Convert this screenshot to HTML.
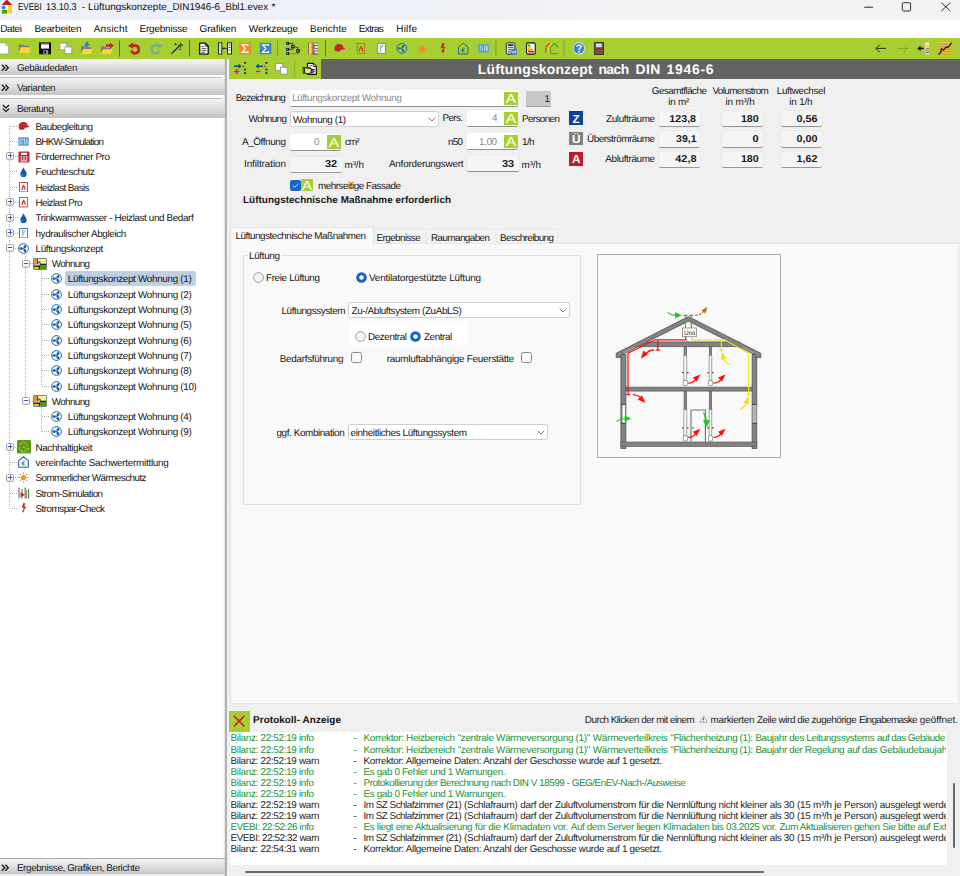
<!DOCTYPE html>
<html><head><meta charset="utf-8"><title>EVEBI</title><style>
html,body{margin:0;padding:0;}
body{width:960px;height:876px;position:relative;overflow:hidden;background:#f0f0f0;font-family:"Liberation Sans",sans-serif;text-rendering:geometricPrecision;}
div,svg,span{position:absolute;box-sizing:border-box;}
.t{white-space:pre;line-height:12px;height:12px;}
</style></head><body>
<div style="left:0px;top:0px;width:960px;height:19.6px;background:linear-gradient(90deg,#eef1fa 0%,#eff1f8 45%,#f2f2f1 75%,#f3f3f2 100%);"></div>
<div style="left:0px;top:19.6px;width:960px;height:0.8px;background:#f8f9fc;"></div>
<svg style="left:0;top:0" width="14" height="15" viewBox="0 0 14 15"><rect x="1.7" y="4.6" width="10.4" height="9.2" fill="#fff"/><path d="M6.9 -0.4L12.3 4.9H1.5Z" fill="#c4161c"/><circle cx="3.6" cy="7.4" r="1.85" fill="#2f7fc4"/><rect x="1.9" y="9.8" width="5.4" height="3.8" fill="#4e9a0a"/><rect x="7.9" y="5.7" width="4.1" height="7.9" fill="#fdd321"/></svg>
<svg style="left:860px;top:0" width="100" height="20" viewBox="0 0 100 20"><g stroke="#1b1b1b" stroke-width="0.9" fill="none"><path d="M4.2 7.2H13"/><rect x="42.3" y="2.7" width="8.3" height="8.3" rx="1.2"/><path d="M81.3 2.6L90.3 11M90.3 2.6L81.3 11"/></g></svg>
<div style="left:0px;top:20px;width:960px;height:18px;background:#fff;"></div>
<div style="left:0px;top:38px;width:960px;height:21px;background:#a8cf32;"></div>
<svg style="left:0;top:38px" width="960" height="21" viewBox="0 38 960 21"><path d="M-1 42.9H5.6L8.4 45.7V53.9H-1Z" fill="#fff" stroke="#9a9a9a" stroke-width="0.7"/><path d="M5.6 42.9V45.7H8.4" fill="#e8e8e8" stroke="#9a9a9a" stroke-width="0.7"/><path d="M18.8 52.5V44.6H23.0L24.0 45.7H29.0V52.5Z" fill="#7d7d7d"/><path d="M18.900000000000002 53L20.7 47.3H30.6L28.900000000000002 53Z" fill="#fdd633"/><rect x="39" y="42.4" width="12" height="11.9" fill="#0c0c0c"/><rect x="41" y="43" width="8" height="5.6" fill="#fff"/><rect x="41" y="43" width="8" height="1.5" fill="#d8262c"/><rect x="43.2" y="50.2" width="5" height="4.1" fill="#9a9a9a"/><rect x="44.3" y="51" width="1.8" height="2.6" fill="#0c0c0c"/><rect x="59.9" y="43.1" width="6.9" height="6.8" fill="#fff" stroke="#8d8d8d" stroke-width="0.8"/><rect x="64.9" y="46.9" width="6.9" height="6.8" fill="#fff" stroke="#8d8d8d" stroke-width="0.8"/><path d="M81 53.6V46.2H85.2L86.2 47.300000000000004H91.2V53.6Z" fill="#7d7d7d"/><path d="M81.1 54.1L82.9 48.9H92.8L91.1 54.1Z" fill="#fdd633"/><path d="M85.6 41.8H88.2V44.3H90.2L86.9 47.5L83.6 44.3H85.6Z" fill="#2f7fc4"/><path d="M101 53.6V46.6H105.2L106.2 47.7H111.0V53.6Z" fill="#7d7d7d"/><path d="M101.1 54.1L102.9 49.3H112.6L110.89999999999999 54.1Z" fill="#fdd633"/><path d="M106 44.3H110V42.6L113.9 45.5L110 48.4V46.7H106Z" fill="#c8232b"/><path d="M132.4 45.7H135.2A3.8 3.8 0 1 1 131.4 50.6" fill="none" stroke="#c9202a" stroke-width="2.7"/><path d="M133.2 42.4V49L128 45.7Z" fill="#c9202a"/><path d="M158 45.7H155.2A3.8 3.8 0 1 0 159 50.6" fill="none" stroke="#78b286" stroke-width="2.7"/><path d="M157.2 42.4V49L162.4 45.7Z" fill="#78b286"/><path d="M171.3 53.8L179.3 46" stroke="#111" stroke-width="1.1"/><path d="M180.7 42.8V47.6M178.3 45.2H183.2M175.6 43.2V45.2M174.6 44.2H176.6M180.2 48.6V50M179.5 49.3H180.9" stroke="#111" stroke-width="0.8"/><path d="M199.7 43.2H205.4L208.2 46V54.1H199.7Z" fill="#fff" stroke="#111" stroke-width="1.3" stroke-linejoin="round"/><path d="M205.2 43.4V46.2H208" fill="none" stroke="#111" stroke-width="0.8"/><path d="M201.5 46.4H203.9M201.5 48.6H206.4M201.5 50.6H206.4M201.5 52.4H205" stroke="#333" stroke-width="0.8"/><rect x="218.4" y="42.8" width="3.4" height="11.2" fill="#fff" stroke="#111" stroke-width="0.9"/><rect x="227.5" y="42.8" width="4" height="11.2" fill="#fff" stroke="#111" stroke-width="0.9"/><path d="M219.4 45H220.8M219.4 47H220.8M219.4 49H220.8M219.4 51H220.8" stroke="#5a9a28" stroke-width="0.9"/><path d="M228.6 45H230.6M228.6 47.5H230.6M228.6 50H230.6" stroke="#c8232b" stroke-width="1"/><path d="M222.4 48.4H227" stroke="#111" stroke-width="0.8"/><path d="M224.2 47L222.6 48.4L224.2 49.8Z" fill="#111"/><rect x="239.3" y="42.8" width="11.5" height="11.5" fill="#ee8b2f"/><path d="M247.9 46.0V44.8H242.10000000000002L245.3 48.55L242.10000000000002 52.3H247.9V51.099999999999994" fill="none" stroke="#fff" stroke-width="1.25" stroke-linejoin="miter"/><rect x="259.8" y="42.8" width="11.5" height="11.5" fill="#3a87c4"/><path d="M268.40000000000003 46.0V44.8H262.6L265.8 48.55L262.6 52.3H268.40000000000003V51.099999999999994" fill="none" stroke="#fff" stroke-width="1.25" stroke-linejoin="miter"/><path d="M289 43.4H292.8V45.2M289 49.4H292.8V48" fill="none" stroke="#1560b8" stroke-width="1.1"/><path d="M294.4 47.3H297.8V49.4M297.8 52.4V53.8" fill="none" stroke="#d02028" stroke-width="1.1"/><path d="M289 53.6H297.8" fill="none" stroke="#c87a28" stroke-width="1.3"/><g fill="#0c0c0c"><rect x="286.2" y="41.9" width="2.9" height="2.9"/><rect x="286.2" y="47.9" width="2.9" height="2.9"/><rect x="286.2" y="52.2" width="2.9" height="2.8"/><rect x="291.2" y="45" width="3.4" height="3.2"/><rect x="296.3" y="49.2" width="3.5" height="3.4"/></g><g fill="#e8e8e8"><rect x="287.2" y="42.8" width="0.9" height="1"/><rect x="287.2" y="48.8" width="0.9" height="1"/><rect x="287.2" y="53.1" width="0.9" height="1"/><rect x="292.3" y="46" width="1.2" height="1.2"/><rect x="297.4" y="50.3" width="1.2" height="1.2"/></g><rect x="308.2" y="42.7" width="9.8" height="11.9" fill="#5e5e66"/><rect x="309" y="42.7" width="2.7" height="11.9" fill="#fdd835"/><rect x="311.7" y="42.7" width="1.4" height="11.9" fill="#e0703a"/><g fill="#f4f4f4"><rect x="313.6" y="43.5" width="4.2" height="1.5"/><rect x="314.6" y="46" width="3.2" height="1.9"/><rect x="313.6" y="48.9" width="4.2" height="1.5"/><rect x="314.6" y="51.4" width="3.2" height="1.9"/></g><g fill="#d8404a"><rect x="313.2" y="43.5" width="0.9" height="1.5"/><rect x="313.2" y="48.9" width="0.9" height="1.5"/></g><g fill="#fff3b0"><rect x="309" y="45.4" width="2.7" height="0.6"/><rect x="309" y="48.2" width="2.7" height="0.6"/><rect x="309" y="51" width="2.7" height="0.6"/></g><path d="M334.5 48.6C334.3 45.8 336.6 44 339.2 44.1C341.6 44.2 343 45.8 343.3 47.4L345.2 48.5C345.3 49 343 49.4 341 49.8L339.8 51.2C338.2 51.7 335.6 51.5 334.9 50.6Z" fill="#c8232b"/><rect x="357.3" y="43.4" width="7.4" height="9.9" fill="none" stroke="#d8612b" stroke-width="0.9"/><path d="M358.9 51.6C358.5 48.8 360.3 47.8 360.9 45.2C362 47.4 363.6 48.8 363.3 51.6H362.1C362.4 50.2 361.7 49.4 360.9 48.6C360.3 49.4 359.7 50.2 360 51.6Z" fill="#d6342b"/><rect x="377.7" y="43.4" width="7.8" height="9.9" fill="#fff" stroke="#4a8fc9" stroke-width="0.9"/><path d="M380.6 44.8V52M380.6 48.4C380.6 47 382.8 47.2 382.8 45M382 45.2H383.4" stroke="#4a8fc9" stroke-width="0.8" fill="none"/><circle cx="401.8" cy="48.3" r="4.9" fill="none" stroke="#1c64b0" stroke-width="1"/><g fill="#1c64b0"><ellipse cx="399.5" cy="48.4" rx="1.6" ry="1.15"/><ellipse cx="403.2" cy="46.4" rx="1.6" ry="1.15" transform="rotate(-55 403.2 46.4)"/><ellipse cx="403.1" cy="50.3" rx="1.6" ry="1.15" transform="rotate(55 403.1 50.3)"/><circle cx="401.7" cy="48.4" r="0.55"/></g><circle cx="422.1" cy="48.9" r="2.6" fill="#f08a24"/><g stroke="#ee9438" stroke-width="1.15"><path d="M422.1 43.7V45.5M422.1 52.3V54.1M416.9 48.9H418.7M425.5 48.9H427.3M418.5 45.3L419.7 46.5M424.5 51.3L425.7 52.5M425.7 45.3L424.5 46.5M419.7 51.3L418.5 52.5"/></g><path d="M442 43.3L444.6 43.3L443.3 46.6L445.2 46.6L443.6 50.4L444.9 50.4L442.9 53.3L441 50.4L442.2 50.4L443 48L440.9 48Z" fill="#d02028"/><path d="M458.5 54V47L463.2 43L467.9 47V54Z" fill="none" stroke="#1f6cae" stroke-width="1" stroke-linejoin="round"/><path d="M465 48.3C464 47.7 462.3 48 462.2 50.1C462.3 52.2 464 52.5 465 51.9M461.3 49.6H464.1M461.3 50.7H464.1" stroke="#1f6cae" stroke-width="0.8" fill="none"/><rect x="478.4" y="44.3" width="10.4" height="8.1" fill="#4a98d4"/><path d="M480.2 45.5V51.2M482 45.5C481.2 47 483 48 482 51.2M484.6 45.5V51.2M486.2 45.5V51.2M487.6 45.5V51.2" stroke="#dff0fb" stroke-width="0.7" fill="none"/><rect x="506.3" y="42.8" width="8.6" height="11.4" rx="0.9" fill="#efefef" stroke="#2a2a2a" stroke-width="1"/><path d="M508 45.1H513.4" stroke="#0c0c0c" stroke-width="1.5"/><path d="M508 47.4H513.4M508 49.4H510.6M508 51.4H510M508 53H509.6" stroke="#333" stroke-width="0.8"/><rect x="510.4" y="48.8" width="6.6" height="5.8" fill="#3e7fc8"/><path d="M511.5 50.3L512.6 53.2L513.8 51L515 53.2L516.1 50.3" stroke="#e2ecf8" stroke-width="0.75" fill="none"/><rect x="526.6" y="42.9" width="8.6" height="11.2" rx="1.2" fill="#fff" stroke="#111" stroke-width="1.1"/><rect x="528" y="44.4" width="2" height="1.5" fill="#3a9a35"/><rect x="528" y="46" width="3" height="1.5" fill="#9fc92e"/><rect x="528" y="47.6" width="4" height="1.5" fill="#f5d928"/><rect x="528" y="49.2" width="5" height="1.5" fill="#ef8a2a"/><rect x="528" y="50.8" width="6" height="1.7" fill="#d8262c"/><path d="M549.6 43.4L546 47V52.2" fill="none" stroke="#c8232b" stroke-width="1.2" stroke-dasharray="2.2 0.7"/><path d="M551.8 43.6L548.2 47.2V53.4H549.4" fill="none" stroke="#f6cf2e" stroke-width="1.2" stroke-dasharray="2.2 0.7"/><path d="M558.2 47.6L554.4 43.3L550.4 47.6V53.8H558" fill="none" stroke="#4c9a1e" stroke-width="1.1"/><circle cx="578.9" cy="48.3" r="5.7" fill="#3d85c8" stroke="#e6eef7" stroke-width="0.9"/><path d="M576.9 46.7C576.9 44.6 581 44.6 581 46.8C581 48.2 579 48 579 49.8" stroke="#fff" stroke-width="1.4" fill="none"/><rect x="578.2" y="50.8" width="1.6" height="1.5" fill="#fff"/><rect x="594.4" y="42.3" width="9" height="12.3" fill="#7b4b3c" stroke="#3a2520" stroke-width="0.8"/><rect x="596" y="43.6" width="5.8" height="3.6" fill="#bfe0f7"/><rect x="594.8" y="48.4" width="8.2" height="0.6" fill="#63392d"/><rect x="119.0" y="40.3" width="1" height="16.2" fill="#4f6a17"/><rect x="189.0" y="40.3" width="1" height="16.2" fill="#4f6a17"/><rect x="277.1" y="40.3" width="1" height="16.2" fill="#7f9f2a"/><rect x="325.0" y="40.3" width="1" height="16.2" fill="#5a771b"/><rect x="495.4" y="40.3" width="1" height="16.2" fill="#7f9f2a"/><rect x="563.5" y="40.3" width="1" height="16.2" fill="#7f9f2a"/><path d="M886 48.4H876.2M879.8 44.6L876 48.4L879.8 52.2" fill="none" stroke="#1a1a1a" stroke-width="0.9"/><path d="M897.4 48.4H907.4M903.8 44.6L907.6 48.4L903.8 52.2" fill="none" stroke="#7d9d2d" stroke-width="0.9"/><rect x="924.8" y="42.2" width="4.8" height="12.6" fill="#f4f4f4" stroke="#a8a8a8" stroke-width="0.7"/><rect x="925.4" y="44.4" width="3.6" height="3.2" fill="#f8d62e"/><rect x="925.4" y="48.2" width="3.6" height="1.2" fill="#d95c3a"/><rect x="925.4" y="49.8" width="3.6" height="1.6" fill="#7fb43a"/><rect x="925.4" y="52" width="3.6" height="0.8" fill="#333"/><path d="M923.6 48.4H919.4" stroke="#111" stroke-width="1.6"/><path d="M920.6 45.8L917.2 48.4L920.6 51Z" fill="#111"/><rect x="938" y="42" width="14.2" height="13.2" fill="#f2c22e"/><g fill="#a89a55"><rect x="938" y="43.8" width="14.2" height="1"/><rect x="938" y="46.2" width="14.2" height="1"/><rect x="938" y="48.6" width="14.2" height="1"/><rect x="938" y="51" width="14.2" height="1"/><rect x="938" y="53.4" width="14.2" height="1"/></g><path d="M938.6 54.6L940.6 52.4L941.6 48.8L943.4 50.2L946 47.2L947.6 47.6L951.8 42.6" fill="none" stroke="#151515" stroke-width="1.2"/></svg>
<div style="left:0px;top:59px;width:225.2px;height:817px;background:#fff;"></div>
<div style="left:0px;top:59.6px;width:225.2px;height:15.1px;background:linear-gradient(#f2f2f2 0%,#e8e8e8 30%,#d0d0d0 80%,#c4c4c4 100%);"></div>
<svg style="left:1.4px;top:63.800000000000004px" width="8.2" height="7.6" viewBox="0 0 8.2 7.6"><path d="M0.9 0.8L3.8 3.8L0.9 6.8M4.4 0.8L7.3 3.8L4.4 6.8" stroke="#111" stroke-width="1.25" fill="none"/></svg>
<div style="left:0px;top:77.2px;width:221.5px;height:0.8px;background:#bdbdbd;"></div>
<div style="left:0px;top:77.9px;width:225.2px;height:17.1px;background:linear-gradient(#f2f2f2 0%,#e8e8e8 30%,#d0d0d0 80%,#c4c4c4 100%);"></div>
<svg style="left:1.4px;top:83.9px" width="8.2" height="7.6" viewBox="0 0 8.2 7.6"><path d="M0.9 0.8L3.8 3.8L0.9 6.8M4.4 0.8L7.3 3.8L4.4 6.8" stroke="#111" stroke-width="1.25" fill="none"/></svg>
<div style="left:0px;top:98.1px;width:221.5px;height:0.8px;background:#bdbdbd;"></div>
<div style="left:0px;top:98.8px;width:225.2px;height:17.8px;background:linear-gradient(#f2f2f2 0%,#e8e8e8 30%,#d0d0d0 80%,#c4c4c4 100%);"></div>
<svg style="left:1.5px;top:104.2px" width="8" height="8.4" viewBox="0 0 8 8.4"><path d="M0.9 1L4 3.9L7.1 1M0.9 4.6L4 7.5L7.1 4.6" stroke="#111" stroke-width="1.25" fill="none"/></svg>
<div style="left:0px;top:116.6px;width:225.2px;height:0.7px;background:#c4c4c4;"></div>
<div style="left:0px;top:857.8px;width:225.2px;height:0.9px;background:#aaaaaa;"></div>
<div style="left:0px;top:858.6px;width:225.2px;height:15.7px;background:linear-gradient(#f2f2f2 0%,#e8e8e8 30%,#d0d0d0 80%,#c4c4c4 100%);"></div>
<svg style="left:1.4px;top:863.6px" width="8.2" height="7.6" viewBox="0 0 8.2 7.6"><path d="M0.9 0.8L3.8 3.8L0.9 6.8M4.4 0.8L7.3 3.8L4.4 6.8" stroke="#111" stroke-width="1.25" fill="none"/></svg>
<div style="left:0px;top:874.3px;width:225.2px;height:1.7px;background:#ebebeb;"></div>
<div style="left:222.6px;top:59px;width:2.6px;height:817px;background:linear-gradient(90deg,rgba(200,200,200,0),rgba(200,200,200,0.55));"></div>
<div style="left:225.1px;top:59px;width:1.9px;height:817px;background:linear-gradient(90deg,#b4b4b4,#a9a9a9 60%,#c4c4c4);"></div>
<div style="left:227px;top:59px;width:1.9px;height:19.9px;background:#f6f6fa;"></div>
<div style="left:64.7px;top:271.3px;width:131.2px;height:15.1px;background:#c1cfe2;border-radius:2.5px;"></div>
<div style="left:8.7px;top:126.0px;width:1px;height:382.375px;background:repeating-linear-gradient(180deg,#b2b2b2 0 1px,transparent 1px 2px);"></div>
<div style="left:25.1px;top:254.36px;width:1px;height:142.95px;background:repeating-linear-gradient(180deg,#b2b2b2 0 1px,transparent 1px 2px);"></div>
<div style="left:41.0px;top:269.655px;width:1px;height:116.36000000000001px;background:repeating-linear-gradient(180deg,#b2b2b2 0 1px,transparent 1px 2px);"></div>
<div style="left:41.0px;top:407.31px;width:1px;height:24.589999999999975px;background:repeating-linear-gradient(180deg,#b2b2b2 0 1px,transparent 1px 2px);"></div>
<div style="left:9.5px;top:125.5px;width:8.5px;height:1px;background:repeating-linear-gradient(90deg,#b2b2b2 0 1px,transparent 1px 2px);"></div>
<svg style="left:17.90px;top:121.50px" width="12" height="9" viewBox="0 0 12 9"><path transform="translate(0,-0.7)" d="M0.6 5.2C0.6 2.4 2.8 0.6 5.4 0.6C8 0.6 9.6 2.3 9.8 4.2L11.6 5.2C11.8 5.9 9 6.3 7 6.6L6 8.2C4 8.6 1.5 8.2 0.9 7.4Z" fill="#c1272d"/></svg>
<div style="left:9.5px;top:140.795px;width:8.5px;height:1px;background:repeating-linear-gradient(90deg,#b2b2b2 0 1px,transparent 1px 2px);"></div>
<svg style="left:18.40px;top:136.79px" width="11" height="9" viewBox="0 0 11 9"><rect x="0.3" y="0.3" width="10.4" height="8.4" fill="#4f9bd0"/><path d="M2 1.5V7.5M4 1.5V4M4 5V7.5M6.5 1.5C5.5 3 7.5 4.5 6.5 7.5M8.7 1.5C7.7 3 9.7 4.5 8.7 7.5" stroke="#e8f3fb" stroke-width="0.8" fill="none"/></svg>
<div style="left:13px;top:156.09px;width:5px;height:1px;background:repeating-linear-gradient(90deg,#b2b2b2 0 1px,transparent 1px 2px);"></div>
<svg style="left:6px;top:152px" width="8" height="8" viewBox="0 0 8 8"><defs><linearGradient id="eg2" x1="0" y1="0" x2="0" y2="1"><stop offset="0.4" stop-color="#fff"/><stop offset="1" stop-color="#ececec"/></linearGradient></defs><rect x="0.5" y="0.5" width="7" height="6.8" rx="1" fill="url(#eg2)" stroke="#989898" stroke-width="0.9"/><path d="M1.8 3.5H6.2M4.5 1.4V5.7" stroke="#3b5cc0" stroke-width="1"/></svg>
<svg style="left:17.90px;top:150.59px" width="12" height="12" viewBox="0 0 12 12"><rect x="0.5" y="0.5" width="11" height="11" rx="1" fill="#c1272d"/><rect x="3" y="1.8" width="6" height="2.2" fill="#fff"/><g fill="#fff"><rect x="2.6" y="5.3" width="1.6" height="1.3"/><rect x="5.2" y="5.3" width="1.6" height="1.3"/><rect x="7.8" y="5.3" width="1.6" height="1.3"/><rect x="2.6" y="7.4" width="1.6" height="1.3"/><rect x="5.2" y="7.4" width="1.6" height="1.3"/><rect x="7.8" y="7.4" width="1.6" height="1.3"/><rect x="2.6" y="9.4" width="6.8" height="1.1"/></g></svg>
<div style="left:9.5px;top:171.385px;width:8.5px;height:1px;background:repeating-linear-gradient(90deg,#b2b2b2 0 1px,transparent 1px 2px);"></div>
<svg style="left:20.40px;top:166.69px" width="7" height="10.4" viewBox="0 0 7 10.4"><path d="M3.5 0.2C4.3 2.9 6.7 4.6 6.7 7A3.2 3.2 0 0 1 0.3 7C0.3 4.6 2.7 2.9 3.5 0.2Z" fill="#1659a5"/><circle cx="2.1" cy="7.9" r="0.55" fill="#cfe0f3"/></svg>
<div style="left:9.5px;top:186.68px;width:8.5px;height:1px;background:repeating-linear-gradient(90deg,#b2b2b2 0 1px,transparent 1px 2px);"></div>
<svg style="left:19.40px;top:181.98px" width="9" height="10.4" viewBox="0 0 9 10.4"><rect x="0.45" y="0.45" width="8.1" height="9.5" fill="#fff" stroke="#cb3b40" stroke-width="0.9"/><path d="M2.6 7.9C2 5.6 3.9 4.6 4.4 2.4C5.6 3.9 7 5.2 6.6 7.9H5.5C5.9 6.6 5.3 5.9 4.6 5.2C4.2 6 3.6 6.6 3.9 7.9Z" fill="#cf2b30"/></svg>
<div style="left:13px;top:201.975px;width:5px;height:1px;background:repeating-linear-gradient(90deg,#b2b2b2 0 1px,transparent 1px 2px);"></div>
<svg style="left:6px;top:198px" width="8" height="8" viewBox="0 0 8 8"><defs><linearGradient id="eg5" x1="0" y1="0" x2="0" y2="1"><stop offset="0.4" stop-color="#fff"/><stop offset="1" stop-color="#ececec"/></linearGradient></defs><rect x="0.5" y="0.5" width="7" height="6.8" rx="1" fill="url(#eg5)" stroke="#989898" stroke-width="0.9"/><path d="M1.8 3.5H6.2M4.5 1.4V5.7" stroke="#3b5cc0" stroke-width="1"/></svg>
<svg style="left:19.40px;top:197.28px" width="9" height="10.4" viewBox="0 0 9 10.4"><rect x="0.45" y="0.45" width="8.1" height="9.5" fill="#fff" stroke="#cb3b40" stroke-width="0.9"/><path d="M2.6 7.9C2 5.6 3.9 4.6 4.4 2.4C5.6 3.9 7 5.2 6.6 7.9H5.5C5.9 6.6 5.3 5.9 4.6 5.2C4.2 6 3.6 6.6 3.9 7.9Z" fill="#cf2b30"/></svg>
<div style="left:13px;top:217.26999999999998px;width:5px;height:1px;background:repeating-linear-gradient(90deg,#b2b2b2 0 1px,transparent 1px 2px);"></div>
<svg style="left:6px;top:214px" width="8" height="8" viewBox="0 0 8 8"><defs><linearGradient id="eg6" x1="0" y1="0" x2="0" y2="1"><stop offset="0.4" stop-color="#fff"/><stop offset="1" stop-color="#ececec"/></linearGradient></defs><rect x="0.5" y="0.5" width="7" height="6.8" rx="1" fill="url(#eg6)" stroke="#989898" stroke-width="0.9"/><path d="M1.8 3.5H6.2M4.5 1.4V5.7" stroke="#3b5cc0" stroke-width="1"/></svg>
<svg style="left:20.40px;top:212.57px" width="7" height="10.4" viewBox="0 0 7 10.4"><path d="M3.5 0.2C4.3 2.9 6.7 4.6 6.7 7A3.2 3.2 0 0 1 0.3 7C0.3 4.6 2.7 2.9 3.5 0.2Z" fill="#1659a5"/><circle cx="2.1" cy="7.9" r="0.55" fill="#cfe0f3"/></svg>
<div style="left:13px;top:232.565px;width:5px;height:1px;background:repeating-linear-gradient(90deg,#b2b2b2 0 1px,transparent 1px 2px);"></div>
<svg style="left:6px;top:229px" width="8" height="8" viewBox="0 0 8 8"><defs><linearGradient id="eg7" x1="0" y1="0" x2="0" y2="1"><stop offset="0.4" stop-color="#fff"/><stop offset="1" stop-color="#ececec"/></linearGradient></defs><rect x="0.5" y="0.5" width="7" height="6.8" rx="1" fill="url(#eg7)" stroke="#989898" stroke-width="0.9"/><path d="M1.8 3.5H6.2M4.5 1.4V5.7" stroke="#3b5cc0" stroke-width="1"/></svg>
<svg style="left:19.40px;top:227.87px" width="9" height="10.4" viewBox="0 0 9 10.4"><rect x="0.5" y="0.5" width="8" height="9.4" fill="#fff" stroke="#3a80c0" stroke-width="1"/><path d="M3.8 2.1V8.6M3.8 5.6L6.2 3.4V2.4M3 2.3H4.6" stroke="#4a8fc9" stroke-width="0.8" fill="none"/></svg>
<div style="left:13px;top:247.86px;width:5px;height:1px;background:repeating-linear-gradient(90deg,#b2b2b2 0 1px,transparent 1px 2px);"></div>
<svg style="left:6px;top:244px" width="8" height="8" viewBox="0 0 8 8"><defs><linearGradient id="eg8" x1="0" y1="0" x2="0" y2="1"><stop offset="0.4" stop-color="#fff"/><stop offset="1" stop-color="#ececec"/></linearGradient></defs><rect x="0.5" y="0.5" width="7" height="6.8" rx="1" fill="url(#eg8)" stroke="#989898" stroke-width="0.9"/><path d="M1.8 3.5H6.2" stroke="#3b5cc0" stroke-width="1"/></svg>
<svg style="left:18.40px;top:242.86px" width="11" height="11" viewBox="0 0 11 11"><circle cx="5.5" cy="5.5" r="4.85" fill="#fff" stroke="#1760a8" stroke-width="1"/><ellipse cx="3.25" cy="5.6" rx="1.7" ry="1.3" fill="#1760a8"/><ellipse cx="6.9" cy="3.7" rx="1.75" ry="1.3" transform="rotate(-55 6.9 3.7)" fill="#1760a8"/><ellipse cx="6.8" cy="7.5" rx="1.75" ry="1.3" transform="rotate(55 6.8 7.5)" fill="#1760a8"/><circle cx="5.4" cy="5.6" r="0.55" fill="#1760a8"/></svg>
<div style="left:29.5px;top:263.155px;width:3.5px;height:1px;background:repeating-linear-gradient(90deg,#b2b2b2 0 1px,transparent 1px 2px);"></div>
<svg style="left:22px;top:260px" width="8" height="8" viewBox="0 0 8 8"><defs><linearGradient id="eg9" x1="0" y1="0" x2="0" y2="1"><stop offset="0.4" stop-color="#fff"/><stop offset="1" stop-color="#ececec"/></linearGradient></defs><rect x="0.5" y="0.5" width="7" height="6.8" rx="1" fill="url(#eg9)" stroke="#989898" stroke-width="0.9"/><path d="M1.8 3.5H6.2" stroke="#3b5cc0" stroke-width="1"/></svg>
<svg style="left:33.00px;top:257.65px" width="14" height="12" viewBox="0 0 14 12"><rect x="0.45" y="0.45" width="13.1" height="11.1" fill="#1a1a1a"/><rect x="0.9" y="1" width="3.4" height="5" fill="#f0922a"/><rect x="5" y="1" width="8.1" height="4.7" fill="#f7f0a0"/><path d="M4.3 3.4H7.4V8.2H0.9V6.2H5.4V3.4Z" fill="#1a1a1a"/><path d="M1 6.9H6.1V4.4" fill="none" stroke="#f1f1f1" stroke-width="1.2"/><rect x="1.1" y="8.9" width="4.7" height="2" fill="#f8d21c"/><rect x="7" y="6.9" width="6.1" height="4.1" fill="#4f9a06"/></svg>
<div style="left:41.5px;top:278.45px;width:8.5px;height:1px;background:repeating-linear-gradient(90deg,#b2b2b2 0 1px,transparent 1px 2px);"></div>
<svg style="left:50.65px;top:273.45px" width="11" height="11" viewBox="0 0 11 11"><circle cx="5.5" cy="5.5" r="4.85" fill="#fff" stroke="#1760a8" stroke-width="1"/><ellipse cx="3.25" cy="5.6" rx="1.7" ry="1.3" fill="#1760a8"/><ellipse cx="6.9" cy="3.7" rx="1.75" ry="1.3" transform="rotate(-55 6.9 3.7)" fill="#1760a8"/><ellipse cx="6.8" cy="7.5" rx="1.75" ry="1.3" transform="rotate(55 6.8 7.5)" fill="#1760a8"/><circle cx="5.4" cy="5.6" r="0.55" fill="#1760a8"/></svg>
<div style="left:41.5px;top:293.745px;width:8.5px;height:1px;background:repeating-linear-gradient(90deg,#b2b2b2 0 1px,transparent 1px 2px);"></div>
<svg style="left:50.65px;top:288.75px" width="11" height="11" viewBox="0 0 11 11"><circle cx="5.5" cy="5.5" r="4.85" fill="#fff" stroke="#1760a8" stroke-width="1"/><ellipse cx="3.25" cy="5.6" rx="1.7" ry="1.3" fill="#1760a8"/><ellipse cx="6.9" cy="3.7" rx="1.75" ry="1.3" transform="rotate(-55 6.9 3.7)" fill="#1760a8"/><ellipse cx="6.8" cy="7.5" rx="1.75" ry="1.3" transform="rotate(55 6.8 7.5)" fill="#1760a8"/><circle cx="5.4" cy="5.6" r="0.55" fill="#1760a8"/></svg>
<div style="left:41.5px;top:309.03999999999996px;width:8.5px;height:1px;background:repeating-linear-gradient(90deg,#b2b2b2 0 1px,transparent 1px 2px);"></div>
<svg style="left:50.65px;top:304.04px" width="11" height="11" viewBox="0 0 11 11"><circle cx="5.5" cy="5.5" r="4.85" fill="#fff" stroke="#1760a8" stroke-width="1"/><ellipse cx="3.25" cy="5.6" rx="1.7" ry="1.3" fill="#1760a8"/><ellipse cx="6.9" cy="3.7" rx="1.75" ry="1.3" transform="rotate(-55 6.9 3.7)" fill="#1760a8"/><ellipse cx="6.8" cy="7.5" rx="1.75" ry="1.3" transform="rotate(55 6.8 7.5)" fill="#1760a8"/><circle cx="5.4" cy="5.6" r="0.55" fill="#1760a8"/></svg>
<div style="left:41.5px;top:324.33500000000004px;width:8.5px;height:1px;background:repeating-linear-gradient(90deg,#b2b2b2 0 1px,transparent 1px 2px);"></div>
<svg style="left:50.65px;top:319.34px" width="11" height="11" viewBox="0 0 11 11"><circle cx="5.5" cy="5.5" r="4.85" fill="#fff" stroke="#1760a8" stroke-width="1"/><ellipse cx="3.25" cy="5.6" rx="1.7" ry="1.3" fill="#1760a8"/><ellipse cx="6.9" cy="3.7" rx="1.75" ry="1.3" transform="rotate(-55 6.9 3.7)" fill="#1760a8"/><ellipse cx="6.8" cy="7.5" rx="1.75" ry="1.3" transform="rotate(55 6.8 7.5)" fill="#1760a8"/><circle cx="5.4" cy="5.6" r="0.55" fill="#1760a8"/></svg>
<div style="left:41.5px;top:339.63px;width:8.5px;height:1px;background:repeating-linear-gradient(90deg,#b2b2b2 0 1px,transparent 1px 2px);"></div>
<svg style="left:50.65px;top:334.63px" width="11" height="11" viewBox="0 0 11 11"><circle cx="5.5" cy="5.5" r="4.85" fill="#fff" stroke="#1760a8" stroke-width="1"/><ellipse cx="3.25" cy="5.6" rx="1.7" ry="1.3" fill="#1760a8"/><ellipse cx="6.9" cy="3.7" rx="1.75" ry="1.3" transform="rotate(-55 6.9 3.7)" fill="#1760a8"/><ellipse cx="6.8" cy="7.5" rx="1.75" ry="1.3" transform="rotate(55 6.8 7.5)" fill="#1760a8"/><circle cx="5.4" cy="5.6" r="0.55" fill="#1760a8"/></svg>
<div style="left:41.5px;top:354.925px;width:8.5px;height:1px;background:repeating-linear-gradient(90deg,#b2b2b2 0 1px,transparent 1px 2px);"></div>
<svg style="left:50.65px;top:349.93px" width="11" height="11" viewBox="0 0 11 11"><circle cx="5.5" cy="5.5" r="4.85" fill="#fff" stroke="#1760a8" stroke-width="1"/><ellipse cx="3.25" cy="5.6" rx="1.7" ry="1.3" fill="#1760a8"/><ellipse cx="6.9" cy="3.7" rx="1.75" ry="1.3" transform="rotate(-55 6.9 3.7)" fill="#1760a8"/><ellipse cx="6.8" cy="7.5" rx="1.75" ry="1.3" transform="rotate(55 6.8 7.5)" fill="#1760a8"/><circle cx="5.4" cy="5.6" r="0.55" fill="#1760a8"/></svg>
<div style="left:41.5px;top:370.22px;width:8.5px;height:1px;background:repeating-linear-gradient(90deg,#b2b2b2 0 1px,transparent 1px 2px);"></div>
<svg style="left:50.65px;top:365.22px" width="11" height="11" viewBox="0 0 11 11"><circle cx="5.5" cy="5.5" r="4.85" fill="#fff" stroke="#1760a8" stroke-width="1"/><ellipse cx="3.25" cy="5.6" rx="1.7" ry="1.3" fill="#1760a8"/><ellipse cx="6.9" cy="3.7" rx="1.75" ry="1.3" transform="rotate(-55 6.9 3.7)" fill="#1760a8"/><ellipse cx="6.8" cy="7.5" rx="1.75" ry="1.3" transform="rotate(55 6.8 7.5)" fill="#1760a8"/><circle cx="5.4" cy="5.6" r="0.55" fill="#1760a8"/></svg>
<div style="left:41.5px;top:385.515px;width:8.5px;height:1px;background:repeating-linear-gradient(90deg,#b2b2b2 0 1px,transparent 1px 2px);"></div>
<svg style="left:50.65px;top:380.51px" width="11" height="11" viewBox="0 0 11 11"><circle cx="5.5" cy="5.5" r="4.85" fill="#fff" stroke="#1760a8" stroke-width="1"/><ellipse cx="3.25" cy="5.6" rx="1.7" ry="1.3" fill="#1760a8"/><ellipse cx="6.9" cy="3.7" rx="1.75" ry="1.3" transform="rotate(-55 6.9 3.7)" fill="#1760a8"/><ellipse cx="6.8" cy="7.5" rx="1.75" ry="1.3" transform="rotate(55 6.8 7.5)" fill="#1760a8"/><circle cx="5.4" cy="5.6" r="0.55" fill="#1760a8"/></svg>
<div style="left:29.5px;top:400.81px;width:3.5px;height:1px;background:repeating-linear-gradient(90deg,#b2b2b2 0 1px,transparent 1px 2px);"></div>
<svg style="left:22px;top:397px" width="8" height="8" viewBox="0 0 8 8"><defs><linearGradient id="eg18" x1="0" y1="0" x2="0" y2="1"><stop offset="0.4" stop-color="#fff"/><stop offset="1" stop-color="#ececec"/></linearGradient></defs><rect x="0.5" y="0.5" width="7" height="6.8" rx="1" fill="url(#eg18)" stroke="#989898" stroke-width="0.9"/><path d="M1.8 3.5H6.2" stroke="#3b5cc0" stroke-width="1"/></svg>
<svg style="left:33.00px;top:395.31px" width="14" height="12" viewBox="0 0 14 12"><rect x="0.45" y="0.45" width="13.1" height="11.1" fill="#1a1a1a"/><rect x="0.9" y="1" width="3.4" height="5" fill="#f0922a"/><rect x="5" y="1" width="8.1" height="4.7" fill="#f7f0a0"/><path d="M4.3 3.4H7.4V8.2H0.9V6.2H5.4V3.4Z" fill="#1a1a1a"/><path d="M1 6.9H6.1V4.4" fill="none" stroke="#f1f1f1" stroke-width="1.2"/><rect x="1.1" y="8.9" width="4.7" height="2" fill="#f8d21c"/><rect x="7" y="6.9" width="6.1" height="4.1" fill="#4f9a06"/></svg>
<div style="left:41.5px;top:416.105px;width:8.5px;height:1px;background:repeating-linear-gradient(90deg,#b2b2b2 0 1px,transparent 1px 2px);"></div>
<svg style="left:50.65px;top:411.11px" width="11" height="11" viewBox="0 0 11 11"><circle cx="5.5" cy="5.5" r="4.85" fill="#fff" stroke="#1760a8" stroke-width="1"/><ellipse cx="3.25" cy="5.6" rx="1.7" ry="1.3" fill="#1760a8"/><ellipse cx="6.9" cy="3.7" rx="1.75" ry="1.3" transform="rotate(-55 6.9 3.7)" fill="#1760a8"/><ellipse cx="6.8" cy="7.5" rx="1.75" ry="1.3" transform="rotate(55 6.8 7.5)" fill="#1760a8"/><circle cx="5.4" cy="5.6" r="0.55" fill="#1760a8"/></svg>
<div style="left:41.5px;top:431.4px;width:8.5px;height:1px;background:repeating-linear-gradient(90deg,#b2b2b2 0 1px,transparent 1px 2px);"></div>
<svg style="left:50.65px;top:426.40px" width="11" height="11" viewBox="0 0 11 11"><circle cx="5.5" cy="5.5" r="4.85" fill="#fff" stroke="#1760a8" stroke-width="1"/><ellipse cx="3.25" cy="5.6" rx="1.7" ry="1.3" fill="#1760a8"/><ellipse cx="6.9" cy="3.7" rx="1.75" ry="1.3" transform="rotate(-55 6.9 3.7)" fill="#1760a8"/><ellipse cx="6.8" cy="7.5" rx="1.75" ry="1.3" transform="rotate(55 6.8 7.5)" fill="#1760a8"/><circle cx="5.4" cy="5.6" r="0.55" fill="#1760a8"/></svg>
<div style="left:13px;top:446.695px;width:5px;height:1px;background:repeating-linear-gradient(90deg,#b2b2b2 0 1px,transparent 1px 2px);"></div>
<svg style="left:6px;top:443px" width="8" height="8" viewBox="0 0 8 8"><defs><linearGradient id="eg21" x1="0" y1="0" x2="0" y2="1"><stop offset="0.4" stop-color="#fff"/><stop offset="1" stop-color="#ececec"/></linearGradient></defs><rect x="0.5" y="0.5" width="7" height="6.8" rx="1" fill="url(#eg21)" stroke="#989898" stroke-width="0.9"/><path d="M1.8 3.5H6.2M4.5 1.4V5.7" stroke="#3b5cc0" stroke-width="1"/></svg>
<svg style="left:16.90px;top:440.39px" width="14" height="13.6" viewBox="0 0 14 13.6"><rect x="0" y="0" width="14" height="13.6" rx="1.4" fill="#5a9a08"/><path d="M2.6 4.9L6.5 1.6L10 4.6V6.2M2.6 4.9V4.2" fill="none" stroke="#b5d792" stroke-width="0.75" stroke-linejoin="round"/><path d="M2.5 6.9V8.6C2.9 10.3 4.4 10.6 5.6 10.7L4.3 12.1H8.6C10.3 11.6 11.3 10.2 11.8 8.4C10.4 8.3 8.6 8.9 7.4 10.3M5.2 7.3H8.2" fill="none" stroke="#b5d792" stroke-width="0.75" stroke-linejoin="round"/></svg>
<div style="left:9.5px;top:461.99px;width:8.5px;height:1px;background:repeating-linear-gradient(90deg,#b2b2b2 0 1px,transparent 1px 2px);"></div>
<svg style="left:18.40px;top:456.49px" width="11" height="12" viewBox="0 0 11 12"><path d="M0.7 11.3V4.6L5.5 0.8L10.3 4.6V11.3Z" fill="#fff" stroke="#1f64a8" stroke-width="1.1" stroke-linejoin="round"/><path d="M7.3 5.6C6.3 5 4.6 5.3 4.5 7.4C4.6 9.5 6.3 9.8 7.3 9.2M3.6 6.9H6.4M3.6 8H6.4" stroke="#1f64a8" stroke-width="0.8" fill="none"/></svg>
<div style="left:13px;top:477.285px;width:5px;height:1px;background:repeating-linear-gradient(90deg,#b2b2b2 0 1px,transparent 1px 2px);"></div>
<svg style="left:6px;top:474px" width="8" height="8" viewBox="0 0 8 8"><defs><linearGradient id="eg23" x1="0" y1="0" x2="0" y2="1"><stop offset="0.4" stop-color="#fff"/><stop offset="1" stop-color="#ececec"/></linearGradient></defs><rect x="0.5" y="0.5" width="7" height="6.8" rx="1" fill="url(#eg23)" stroke="#989898" stroke-width="0.9"/><path d="M1.8 3.5H6.2M4.5 1.4V5.7" stroke="#3b5cc0" stroke-width="1"/></svg>
<svg style="left:18.40px;top:472.29px" width="11" height="11" viewBox="0 0 11 11"><circle cx="5.5" cy="5.5" r="2.6" fill="#f0902a"/><g stroke="#ee9a40" stroke-width="1.1"><path d="M5.5 0.4V2.2M5.5 8.8V10.6M0.4 5.5H2.2M8.8 5.5H10.6M1.9 1.9L3.1 3.1M7.9 7.9L9.1 9.1M9.1 1.9L7.9 3.1M3.1 7.9L1.9 9.1"/></g></svg>
<div style="left:9.5px;top:492.58px;width:8.5px;height:1px;background:repeating-linear-gradient(90deg,#b2b2b2 0 1px,transparent 1px 2px);"></div>
<svg style="left:17.90px;top:487.08px" width="12" height="12" viewBox="0 0 12 12"><path d="M1 0.5V11.5M4 2V11.5M7.2 0.5V11.5M10.6 2V11.5" stroke="#555" stroke-width="1"/><path d="M8.6 3V11.5" stroke="#7ab929" stroke-width="1.1"/><path d="M2.6 5.2L7 7.7L2.6 10.2Z" fill="#c1272d"/></svg>
<div style="left:9.5px;top:507.875px;width:8.5px;height:1px;background:repeating-linear-gradient(90deg,#b2b2b2 0 1px,transparent 1px 2px);"></div>
<svg style="left:20.90px;top:503.38px" width="6" height="10" viewBox="0 0 6 10"><path d="M2.2 0.3L4.4 0.3L3.2 3.4L5.2 3.4L2.6 8L3.2 8L2 9.8L0.9 7.6L1.8 7.8L2.9 4.8L0.8 4.8Z" fill="#c1272d"/></svg>
<div style="left:228.8px;top:59px;width:92.2px;height:19.8px;background:#a8cf32;"></div>
<div style="left:321px;top:59px;width:639px;height:19.8px;background:#636363;"></div>
<svg style="left:226px;top:59px" width="100" height="20" viewBox="226 59 100 20"><path d="M234 66.2H239.6" stroke="#12419c" stroke-width="1.5"/><path d="M238.6 63.6L241.6 66.2L238.6 68.8Z" fill="#12419c"/><path d="M234.2 71.5H239.2M236.7 69V74" stroke="#d02028" stroke-width="1.3"/><circle cx="243.3" cy="66.3" r="0.85" fill="#d02028"/><g fill="#111"><rect x="244.2" y="62" width="1.7" height="1.7"/><rect x="244.2" y="68.7" width="1.7" height="1.7"/><rect x="244.2" y="72.2" width="1.7" height="1.7"/></g><path d="M263 66.2H257.6" stroke="#12419c" stroke-width="1.5"/><path d="M258.6 63.6L255.6 66.2L258.6 68.8Z" fill="#12419c"/><path d="M255.8 71.5H260.4" stroke="#d02028" stroke-width="1.3"/><circle cx="264.8" cy="66.3" r="0.85" fill="#d02028"/><g fill="#111"><rect x="265.6" y="62" width="1.7" height="1.7"/><rect x="265.6" y="68.7" width="1.7" height="1.7"/><rect x="265.6" y="72.2" width="1.7" height="1.7"/></g><rect x="275.4" y="63.5" width="7.3" height="6.8" fill="#fff" stroke="#8d8d8d" stroke-width="0.8"/><rect x="280.4" y="67.3" width="6.8" height="6.8" fill="#fff" stroke="#8d8d8d" stroke-width="0.8"/><rect x="294.3" y="60.6" width="0.9" height="17.2" fill="#86a437"/><path d="M307.5 63.4H313.4L316.3 66.3V74.3H307.5Z" fill="#fff" stroke="#0c0c0c" stroke-width="1.2" stroke-linejoin="round"/><path d="M313.2 63.6V66.5H316.1" fill="#d8d8d8" stroke="#0c0c0c" stroke-width="0.8"/><path d="M309.2 65.6H312M309.2 67.2H311" stroke="#555" stroke-width="0.8"/><rect x="303" y="67.5" width="1.5" height="6" fill="#2f86d2" stroke="#0c0c0c" stroke-width="0.5"/><path d="M304.7 67.9C306.4 66.9 309 67 311.2 68.3V72.9C309 73.8 306.4 73.7 304.7 73Z" fill="#f2e6a2" stroke="#0c0c0c" stroke-width="0.8" stroke-linejoin="round"/><path d="M306.2 68.3C307.8 68.9 309.6 68.9 311 68.4" stroke="#0c0c0c" stroke-width="0.9" fill="none"/><path d="M311.2 69.6H314.6M311.2 71.2H314.6M310.6 72.8H313.6" stroke="#0c0c0c" stroke-width="1.05"/></svg>
<div style="left:290px;top:90.2px;width:228.2px;height:16.4px;background:#fff;border-bottom:1px solid #8f8f8f;border-radius:2px;box-shadow:0 0 0 0.5px #f2f2f2;"></div>
<div style="left:503.5px;top:91.7px;width:14.5px;height:13.3px;background:#a8cf32;"></div>
<div style="left:525.6px;top:90.9px;width:25.7px;height:15.8px;background:#c8c8c8;border-bottom:1.6px solid #9c9c9c;border-radius:1px;"></div>
<div style="left:290px;top:110.5px;width:149.3px;height:16.6px;background:#fff;border:0.8px solid #cfcfcf;border-radius:2.5px;"></div>
<svg style="left:428px;top:116.5px" width="8" height="5" viewBox="0 0 8 5"><path d="M0.7 0.7L4 4L7.3 0.7" stroke="#555" stroke-width="0.8" fill="none"/></svg>
<div style="left:467.2px;top:110px;width:51px;height:16.5px;background:#fff;border-bottom:1px solid #8f8f8f;border-radius:2px;box-shadow:0 0 0 0.5px #f2f2f2;"></div>
<div style="left:503.5px;top:111.7px;width:14.5px;height:13.3px;background:#a8cf32;"></div>
<div style="left:290.2px;top:134px;width:50.5px;height:16.5px;background:#fff;border-bottom:1px solid #8f8f8f;border-radius:2px;box-shadow:0 0 0 0.5px #f2f2f2;"></div>
<div style="left:326.5px;top:135.2px;width:14.5px;height:13.6px;background:#a8cf32;"></div>
<div style="left:467.2px;top:133px;width:51px;height:16.5px;background:#fff;border-bottom:1px solid #8f8f8f;border-radius:2px;box-shadow:0 0 0 0.5px #f2f2f2;"></div>
<div style="left:503.5px;top:134.7px;width:14.5px;height:13.3px;background:#a8cf32;"></div>
<div style="left:290px;top:156.5px;width:51.5px;height:16px;background:#f5f5f5;border-bottom:1px solid #979797;border-radius:2px;box-shadow:0 0 0 0.6px #e6e6e6;"></div>
<div style="left:467px;top:156px;width:51.5px;height:16.3px;background:#f5f5f5;border-bottom:1px solid #979797;border-radius:2px;box-shadow:0 0 0 0.6px #e6e6e6;"></div>
<svg style="left:289.7px;top:179.6px" width="11" height="11" viewBox="0 0 11 11"><rect x="0" y="0" width="11" height="11" rx="2.2" fill="#1565c5"/><path d="M2.9 5.7L4.7 7.3L8 3.9" stroke="#e8f0fb" stroke-width="0.85" fill="none" stroke-linecap="round" stroke-linejoin="round"/></svg>
<div style="left:300.5px;top:178.8px;width:12px;height:11.8px;background:#a8cf32;"></div>
<div style="left:569.4px;top:111.2px;width:13.6px;height:13.8px;background:#10409a;"></div>
<div style="left:659.1px;top:110.7px;width:41px;height:16.6px;background:#f5f5f5;border-bottom:1px solid #979797;border-radius:2px;box-shadow:0 0 0 0.6px #e6e6e6;"></div>
<div style="left:721.9px;top:110.7px;width:41px;height:16.6px;background:#f5f5f5;border-bottom:1px solid #979797;border-radius:2px;box-shadow:0 0 0 0.6px #e6e6e6;"></div>
<div style="left:780.6px;top:110.7px;width:41px;height:16.6px;background:#f5f5f5;border-bottom:1px solid #979797;border-radius:2px;box-shadow:0 0 0 0.6px #e6e6e6;"></div>
<div style="left:569.4px;top:131.6px;width:13.6px;height:13.8px;background:#808080;"></div>
<div style="left:659.1px;top:131.1px;width:41px;height:16.6px;background:#f5f5f5;border-bottom:1px solid #979797;border-radius:2px;box-shadow:0 0 0 0.6px #e6e6e6;"></div>
<div style="left:721.9px;top:131.1px;width:41px;height:16.6px;background:#f5f5f5;border-bottom:1px solid #979797;border-radius:2px;box-shadow:0 0 0 0.6px #e6e6e6;"></div>
<div style="left:780.6px;top:131.1px;width:41px;height:16.6px;background:#f5f5f5;border-bottom:1px solid #979797;border-radius:2px;box-shadow:0 0 0 0.6px #e6e6e6;"></div>
<div style="left:569.4px;top:152.0px;width:13.6px;height:13.8px;background:#ba1f24;"></div>
<div style="left:659.1px;top:151.5px;width:41px;height:16.6px;background:#f5f5f5;border-bottom:1px solid #979797;border-radius:2px;box-shadow:0 0 0 0.6px #e6e6e6;"></div>
<div style="left:721.9px;top:151.5px;width:41px;height:16.6px;background:#f5f5f5;border-bottom:1px solid #979797;border-radius:2px;box-shadow:0 0 0 0.6px #e6e6e6;"></div>
<div style="left:780.6px;top:151.5px;width:41px;height:16.6px;background:#f5f5f5;border-bottom:1px solid #979797;border-radius:2px;box-shadow:0 0 0 0.6px #e6e6e6;"></div>
<div style="left:229.7px;top:243.2px;width:729.6px;height:460.5px;background:#f9f9f9;border:0.8px solid #e7e7e7;"></div>
<div style="left:229.7px;top:226.5px;width:144px;height:17.6px;background:#f9f9f9;border:0.8px solid #e6e6e6;border-bottom:none;border-radius:2px 2px 0 0;"></div>
<div style="left:373.7px;top:229px;width:52.5px;height:14px;background:#f3f3f3;border:0.8px solid #e9e9e9;border-bottom:none;"></div>
<div style="left:426.2px;top:229px;width:69.60000000000002px;height:14px;background:#f3f3f3;border:0.8px solid #e9e9e9;border-bottom:none;"></div>
<div style="left:495.8px;top:229px;width:62.49999999999994px;height:14px;background:#f3f3f3;border:0.8px solid #e9e9e9;border-bottom:none;"></div>
<div style="left:243px;top:254.8px;width:337.5px;height:250px;border:0.9px solid #e0e0e0;border-radius:2px;"></div>
<div style="left:247.5px;top:250px;width:34px;height:10px;background:#f9f9f9;"></div>
<svg style="left:252.7px;top:271.5px" width="11" height="11" viewBox="0 0 11 11"><circle cx="5.5" cy="5.5" r="4.9" fill="#f4f4f4" stroke="#858585" stroke-width="0.8"/></svg>
<svg style="left:355.7px;top:271.5px" width="11" height="11" viewBox="0 0 11 11"><circle cx="5.5" cy="5.5" r="5.3" fill="#1464c4"/><circle cx="5.5" cy="5.5" r="2.3" fill="#fff"/></svg>
<div style="left:348.3px;top:301.7px;width:222px;height:16.8px;background:#fff;border:0.8px solid #cfcfcf;border-radius:2.5px;"></div>
<svg style="left:558.5px;top:308.3px" width="8" height="5" viewBox="0 0 8 5"><path d="M0.7 0.7L4 4L7.3 0.7" stroke="#555" stroke-width="0.8" fill="none"/></svg>
<div style="left:348.5px;top:321px;width:119.3px;height:23.8px;background:#fff;"></div>
<svg style="left:354.7px;top:331.0px" width="11" height="11" viewBox="0 0 11 11"><circle cx="5.5" cy="5.5" r="4.9" fill="#f4f4f4" stroke="#858585" stroke-width="0.8"/></svg>
<svg style="left:410.2px;top:331.0px" width="11" height="11" viewBox="0 0 11 11"><circle cx="5.5" cy="5.5" r="5.3" fill="#1464c4"/><circle cx="5.5" cy="5.5" r="2.3" fill="#fff"/></svg>
<div style="left:351px;top:352.3px;width:10.8px;height:10.8px;background:#fcfcfc;border:0.9px solid #8a8a8a;border-radius:2.4px;"></div>
<div style="left:521px;top:352.3px;width:10.8px;height:10.8px;background:#fcfcfc;border:0.9px solid #8a8a8a;border-radius:2.4px;"></div>
<div style="left:347.7px;top:423.5px;width:200px;height:16.8px;background:#fff;border:0.8px solid #cfcfcf;border-radius:2.5px;"></div>
<svg style="left:536.5px;top:430px" width="8" height="5" viewBox="0 0 8 5"><path d="M0.7 0.7L4 4L7.3 0.7" stroke="#555" stroke-width="0.8" fill="none"/></svg>
<div style="left:597px;top:254px;width:184.3px;height:204.3px;border:1px solid #ababab;background:#f9f9f9;"></div>
<svg style="left:597px;top:254px" width="185" height="205" viewBox="597 254 185 205"><rect x="620.9" y="354.5" width="5" height="94" fill="#828282" stroke="#505050" stroke-width="0.75"/><rect x="752.1" y="354.5" width="4.7" height="94" fill="#828282" stroke="#505050" stroke-width="0.75"/><rect x="620.9" y="442" width="135.9" height="4.5" fill="#828282" stroke="#505050" stroke-width="0.6"/><rect x="625.9" y="387.1" width="126.2" height="4" fill="#828282" stroke="#505050" stroke-width="0.6"/><rect x="622.1" y="404.6" width="3.1" height="18.6" fill="#fff" stroke="#6a6a6a" stroke-width="0.5"/><rect x="620.9" y="403.8" width="5" height="1" fill="#444"/><rect x="620.9" y="422.8" width="5" height="1" fill="#444"/><rect x="752.4" y="404.6" width="4.2" height="18.6" fill="#b4b4b4" stroke="#8a8a8a" stroke-width="0.5"/><rect x="752.1" y="403.8" width="4.7" height="1" fill="#444"/><rect x="752.1" y="422.8" width="4.7" height="1" fill="#444"/><rect x="636.8" y="341.9" width="104" height="4.7" rx="2.3" fill="#828282" stroke="#505050" stroke-width="0.75"/><rect x="684.0" y="346.4" width="2.7" height="9" fill="#828282" stroke="#505050" stroke-width="0.5"/><rect x="683.9" y="355.2" width="2.9" height="25.4" fill="#fff" stroke="#777" stroke-width="0.7"/><rect x="683.3000000000001" y="380.4" width="4.1" height="5.2" rx="0.8" fill="#fff" stroke="#777" stroke-width="0.7"/><rect x="682.3000000000001" y="372" width="1.2" height="1.2" fill="#111"/><rect x="687.2" y="372" width="1.2" height="1.2" fill="#111"/><rect x="684.0" y="391.1" width="2.7" height="18.6" fill="#828282" stroke="#505050" stroke-width="0.5"/><rect x="683.9" y="409.6" width="2.9" height="26.4" fill="#fff" stroke="#777" stroke-width="0.7"/><rect x="683.3000000000001" y="435.8" width="4.1" height="5.2" rx="0.8" fill="#fff" stroke="#777" stroke-width="0.7"/><rect x="682.3000000000001" y="427.3" width="1.2" height="1.2" fill="#111"/><rect x="687.2" y="427.3" width="1.2" height="1.2" fill="#111"/><rect x="709.1999999999999" y="346.4" width="2.5000000000000684" height="9" fill="#828282" stroke="#505050" stroke-width="0.5"/><rect x="709.0999999999999" y="355.2" width="2.700000000000068" height="25.4" fill="#fff" stroke="#777" stroke-width="0.7"/><rect x="708.5" y="380.4" width="3.9000000000000683" height="5.2" rx="0.8" fill="#fff" stroke="#777" stroke-width="0.7"/><rect x="707.5" y="372" width="1.2" height="1.2" fill="#111"/><rect x="712.2" y="372" width="1.2" height="1.2" fill="#111"/><rect x="709.1999999999999" y="391.1" width="2.5000000000000684" height="18.6" fill="#828282" stroke="#505050" stroke-width="0.5"/><rect x="709.0999999999999" y="409.6" width="2.700000000000068" height="26.4" fill="#fff" stroke="#777" stroke-width="0.7"/><rect x="708.5" y="435.8" width="3.9000000000000683" height="5.2" rx="0.8" fill="#fff" stroke="#777" stroke-width="0.7"/><rect x="707.5" y="427.3" width="1.2" height="1.2" fill="#111"/><rect x="712.2" y="427.3" width="1.2" height="1.2" fill="#111"/><path d="M691 441.8V410H705.4V441.8" fill="none" stroke="#6e6e6e" stroke-width="1.1"/><rect x="692.4" y="427.3" width="1.2" height="1.2" fill="#111"/><path d="M688.4 316.5L616.2 353.2V357.6L620.9 357.6V355.3L688.4 321.2L755.9 355.3V357.6L760.8 357.6V353.2Z" fill="#828282" stroke="#505050" stroke-width="0.75" stroke-linejoin="round"/><path d="M624 352.6L634.6 347.2M625 354.2L635.6 348.8" stroke="#d9d9d9" stroke-width="0.5"/><path d="M753 352.6L742.4 347.2M752 354.2L741.4 348.8" stroke="#d9d9d9" stroke-width="0.5"/><path d="M685.4 315.4V328M683.4 315.4H687.5" stroke="#22c722" stroke-width="1.1" fill="none"/><path d="M691.4 315.4V328M689.6 315.4H693.4" stroke="#b1781f" stroke-width="1.1" fill="none"/><path d="M685.8 336.6V339.8H655.2L628 353.2V394.7M626.2 394.7H630.4M657.8 339.8V350M655.4 350H660.2" stroke="#ff0f0f" stroke-width="1.25" fill="none"/><path d="M691.7 336.6V339.8H724.8L748.7 353.2V394.7M746.3 394.7H750.9M721.4 339.8V350M719.2 350H723.8" stroke="#f4e11c" stroke-width="1.25" fill="none"/><rect x="682.6" y="328" width="14" height="8.7" fill="#fff" stroke="#777" stroke-width="0.7"/><text x="689.6" y="334.9" font-family="Liberation Sans, sans-serif" font-size="6.3" text-anchor="middle" fill="#222">Unit</text><path d="M667.5 312.4C670.5 315 673.5 315.6 676.5 315.3" stroke="#22c722" stroke-width="1.1" fill="none"/><path d="M682.00 315.20L675.00 318.20L675.00 312.20Z" fill="#22c722"/><path d="M695 315.3C699.5 315.3 702 313.4 703.6 311" stroke="#b1781f" stroke-width="1.1" fill="none" stroke-dasharray="2.6 1"/><path d="M707.60 306.80L705.34 313.39L701.51 310.17Z" fill="#b1781f"/><path d="M653.8 350C650 350 647.6 351.6 646 353.8" stroke="#ff0f0f" stroke-width="1.3" fill="none"/><path d="M640.80 358.80L643.48 350.49L648.21 354.19Z" fill="#ff0f0f"/><path d="M729.8 364.6C726.6 363.2 724.6 361 723.8 358.4" stroke="#f4e11c" stroke-width="1.2" fill="none"/><path d="M721.80 352.00L726.81 358.73L720.82 360.34Z" fill="#f4e11c"/><path d="M632.6 394.7C636.4 394.8 639 396.2 640.8 398" stroke="#ff0f0f" stroke-width="1.3" fill="none"/><path d="M645.40 403.00L637.62 399.46L641.86 395.22Z" fill="#ff0f0f"/><path d="M740.4 409.4C743.4 408 745.4 405.6 746.6 402.8" stroke="#f4e11c" stroke-width="1.2" fill="none"/><path d="M748.60 396.20L749.14 404.58L743.24 402.66Z" fill="#f4e11c"/><path d="M616.4 421.4C619 419.4 622 418.6 625 418.8" stroke="#22c722" stroke-width="1.1" fill="none"/><path d="M631.40 418.80L624.50 421.56L624.71 415.56Z" fill="#22c722"/><path d="M703.2 412.2C705.4 414.6 706.4 417.2 706.6 420.2H709.6L706.4 427L703.4 420.2H705.2C705 417.4 704.2 414.8 703.2 412.2Z" fill="#22c722" stroke="#22c722" stroke-width="0.5" stroke-linejoin="round"/><path d="M688.2 383.2C691.8000000000001 383.2 694.2 381.59999999999997 695.8000000000001 379.4" stroke="#ff0f0f" stroke-width="1.3" fill="none"/><path d="M700.40 374.60L696.69 381.84L692.81 377.53Z" fill="#ff0f0f"/><path d="M688.2 437.4C691.8000000000001 437.4 694.2 435.79999999999995 695.8000000000001 433.59999999999997" stroke="#ff0f0f" stroke-width="1.3" fill="none"/><path d="M700.40 428.80L696.69 436.04L692.81 431.73Z" fill="#ff0f0f"/><path d="M713.4 383.2C717.0 383.2 719.4 381.59999999999997 721.0 379.4" stroke="#ff0f0f" stroke-width="1.3" fill="none"/><path d="M725.60 374.60L721.89 381.84L718.01 377.53Z" fill="#ff0f0f"/><path d="M713.4 437.4C717.0 437.4 719.4 435.79999999999995 721.0 433.59999999999997" stroke="#ff0f0f" stroke-width="1.3" fill="none"/><path d="M725.60 428.80L721.89 436.04L718.01 431.73Z" fill="#ff0f0f"/></svg>
<div style="left:229.2px;top:710.5px;width:21.1px;height:21.2px;background:#a8cf32;"></div>
<svg style="left:233px;top:714.5px" width="12.4" height="12.4" viewBox="0 0 12.4 12.4"><path d="M1.4 1.4L10.9 10.9M10.9 1.4L1.4 10.9" stroke="#c8202a" stroke-width="1.5" stroke-linecap="round"/></svg>
<svg style="left:699px;top:715.3px" width="9" height="8" viewBox="0 0 9 8"><path d="M4.5 0.8L8.3 7.3H0.7Z" fill="#f6f6f6" stroke="#8f8f8f" stroke-width="0.7" stroke-linejoin="round"/><path d="M4.5 2.9V5.2M4.5 5.9V6.6" stroke="#333" stroke-width="0.8"/></svg>
<div style="left:229.7px;top:732.4px;width:717.1px;height:132.3px;background:#fff;"></div>
<div style="left:953px;top:783px;width:1.6px;height:65px;background:#6a6a6a;border-radius:1px;"></div>
<div style="left:245px;top:871.3px;width:519px;height:1.4px;background:#6a6a6a;border-radius:1px;"></div>
<div class="t" style="top:2px;font-size:10px;color:#0c0c0c;transform:scaleX(0.8042);transform-origin:left center;left:18.30px;">EVEBI</div>
<div class="t" style="top:2px;font-size:10px;color:#0c0c0c;transform:scaleX(0.9169);transform-origin:left center;left:46.20px;">13.10.3</div>
<div class="t" style="top:2px;font-size:10px;color:#0c0c0c;left:81.80px;">-</div>
<div class="t" style="top:2px;font-size:10px;color:#0c0c0c;transform:scaleX(0.9968);transform-origin:left center;left:88.30px;">Lüftungskonzepte</div>
<div class="t" style="top:2px;font-size:10px;color:#0c0c0c;transform:scaleX(0.9829);transform-origin:left center;left:167.00px;">_DIN1946-6</div>
<div class="t" style="top:2px;font-size:10px;color:#0c0c0c;transform:scaleX(0.9720);transform-origin:left center;left:220.00px;">_Bbl1.evex</div>
<div class="t" style="top:2px;font-size:10px;color:#0c0c0c;left:271.40px;">*</div>
<div class="t" style="top:24px;font-size:10px;color:#0c0c0c;letter-spacing:-0.415px;left:0.30px;">Datei</div>
<div class="t" style="top:24px;font-size:10px;color:#0c0c0c;letter-spacing:-0.153px;left:34.50px;">Bearbeiten</div>
<div class="t" style="top:24px;font-size:10px;color:#0c0c0c;letter-spacing:0.151px;left:93.80px;">Ansicht</div>
<div class="t" style="top:24px;font-size:10px;color:#0c0c0c;letter-spacing:-0.226px;left:139.50px;">Ergebnisse</div>
<div class="t" style="top:24px;font-size:10px;color:#0c0c0c;letter-spacing:-0.142px;left:199.50px;">Grafiken</div>
<div class="t" style="top:24px;font-size:10px;color:#0c0c0c;letter-spacing:-0.151px;left:248.80px;">Werkzeuge</div>
<div class="t" style="top:24px;font-size:10px;color:#0c0c0c;letter-spacing:0.016px;left:310.00px;">Berichte</div>
<div class="t" style="top:24px;font-size:10px;color:#0c0c0c;letter-spacing:-0.669px;left:358.80px;">Extras</div>
<div class="t" style="top:24px;font-size:10px;color:#0c0c0c;letter-spacing:0.171px;left:396.30px;">Hilfe</div>
<div class="t" style="top:63px;font-size:9.9px;color:#222;letter-spacing:-0.442px;left:16.90px;">Gebäudedaten</div>
<div class="t" style="top:83px;font-size:9.9px;color:#222;letter-spacing:-0.356px;left:16.90px;">Varianten</div>
<div class="t" style="top:104px;font-size:9.9px;color:#222;letter-spacing:-0.442px;left:16.90px;">Beratung</div>
<div class="t" style="top:863px;font-size:9.9px;color:#222;letter-spacing:-0.374px;left:16.90px;">Ergebnisse, Grafiken, Berichte</div>
<div class="t" style="top:122px;font-size:9.9px;color:#141414;letter-spacing:-0.471px;left:35.50px;">Baubegleitung</div>
<div class="t" style="top:137px;font-size:9.9px;color:#141414;letter-spacing:-0.739px;left:35.50px;">BHKW-Simulation</div>
<div class="t" style="top:152px;font-size:9.9px;color:#141414;letter-spacing:-0.387px;left:35.50px;">Förderrechner Pro</div>
<div class="t" style="top:167px;font-size:9.9px;color:#141414;letter-spacing:-0.395px;left:35.50px;">Feuchteschutz</div>
<div class="t" style="top:183px;font-size:9.9px;color:#141414;letter-spacing:-0.617px;left:35.50px;">Heizlast Basis</div>
<div class="t" style="top:198px;font-size:9.9px;color:#141414;letter-spacing:-0.567px;left:35.50px;">Heizlast Pro</div>
<div class="t" style="top:213px;font-size:9.9px;color:#141414;letter-spacing:-0.381px;left:35.50px;">Trinkwarmwasser - Heizlast und Bedarf</div>
<div class="t" style="top:229px;font-size:9.9px;color:#141414;letter-spacing:-0.384px;left:35.50px;">hydraulischer Abgleich</div>
<div class="t" style="top:244px;font-size:9.9px;color:#141414;letter-spacing:-0.338px;left:35.50px;">Lüftungskonzept</div>
<div class="t" style="top:259px;font-size:9.9px;color:#141414;letter-spacing:-0.643px;left:51.75px;">Wohnung</div>
<div class="t" style="top:274px;font-size:9.9px;color:#141414;letter-spacing:-0.316px;left:67.80px;">Lüftungskonzept Wohnung (1)</div>
<div class="t" style="top:290px;font-size:9.9px;color:#141414;letter-spacing:-0.316px;left:67.80px;">Lüftungskonzept Wohnung (2)</div>
<div class="t" style="top:305px;font-size:9.9px;color:#141414;letter-spacing:-0.316px;left:67.80px;">Lüftungskonzept Wohnung (3)</div>
<div class="t" style="top:320px;font-size:9.9px;color:#141414;letter-spacing:-0.316px;left:67.80px;">Lüftungskonzept Wohnung (5)</div>
<div class="t" style="top:336px;font-size:9.9px;color:#141414;letter-spacing:-0.316px;left:67.80px;">Lüftungskonzept Wohnung (6)</div>
<div class="t" style="top:351px;font-size:9.9px;color:#141414;letter-spacing:-0.316px;left:67.80px;">Lüftungskonzept Wohnung (7)</div>
<div class="t" style="top:366px;font-size:9.9px;color:#141414;letter-spacing:-0.316px;left:67.80px;">Lüftungskonzept Wohnung (8)</div>
<div class="t" style="top:382px;font-size:9.9px;color:#141414;letter-spacing:-0.316px;left:67.80px;">Lüftungskonzept Wohnung (10)</div>
<div class="t" style="top:397px;font-size:9.9px;color:#141414;letter-spacing:-0.643px;left:51.75px;">Wohnung</div>
<div class="t" style="top:412px;font-size:9.9px;color:#141414;letter-spacing:-0.316px;left:67.80px;">Lüftungskonzept Wohnung (4)</div>
<div class="t" style="top:427px;font-size:9.9px;color:#141414;letter-spacing:-0.316px;left:67.80px;">Lüftungskonzept Wohnung (9)</div>
<div class="t" style="top:443px;font-size:9.9px;color:#141414;letter-spacing:-0.395px;left:35.50px;">Nachhaltigkeit</div>
<div class="t" style="top:458px;font-size:9.9px;color:#141414;letter-spacing:-0.259px;left:35.50px;">vereinfachte Sachwertermittlung</div>
<div class="t" style="top:473px;font-size:9.9px;color:#141414;letter-spacing:-0.566px;left:35.50px;">Sommerlicher Wärmeschutz</div>
<div class="t" style="top:489px;font-size:9.9px;color:#141414;letter-spacing:-0.542px;left:35.50px;">Strom-Simulation</div>
<div class="t" style="top:504px;font-size:9.9px;color:#141414;letter-spacing:-0.523px;left:35.50px;">Stromspar-Check</div>
<div class="t" style="top:63px;font-size:13.9px;color:#fff;font-weight:bold;letter-spacing:0.201px;left:477.80px;">Lüftungskonzept</div>
<div class="t" style="top:63px;font-size:13.9px;color:#fff;font-weight:bold;letter-spacing:-0.507px;left:598.40px;">nach</div>
<div class="t" style="top:63px;font-size:13.9px;color:#fff;font-weight:bold;letter-spacing:0.531px;left:635.40px;">DIN</div>
<div class="t" style="top:63px;font-size:13.9px;color:#fff;font-weight:bold;letter-spacing:0.747px;left:666.50px;">1946-6</div>
<div class="t" style="top:93px;font-size:9.9px;color:#151515;letter-spacing:-0.691px;right:674.89px;">Bezeichnung</div>
<div class="t" style="top:93px;font-size:9.9px;color:#8a8a8a;letter-spacing:-0.332px;left:291.90px;">Lüftungskonzept Wohnung</div>
<div class="t" style="top:93px;font-size:13.1px;color:#fff;transform:scaleX(1.1907);transform-origin:center center;left:450.75px;width:120px;text-align:center;">A</div>
<div class="t" style="top:94px;font-size:9.9px;color:#222;letter-spacing:-0.330px;right:410.43px;">1</div>
<div class="t" style="top:114px;font-size:9.9px;color:#151515;letter-spacing:-0.618px;right:673.72px;">Wohnung</div>
<div class="t" style="top:115px;font-size:9.9px;color:#151515;letter-spacing:-0.392px;left:293.10px;">Wohnung (1)</div>
<div class="t" style="top:113px;font-size:9.9px;color:#151515;letter-spacing:-0.616px;left:442.50px;">Pers.</div>
<div class="t" style="top:113px;font-size:9.9px;color:#8a8a8a;letter-spacing:-0.330px;right:462.93px;">4</div>
<div class="t" style="top:113px;font-size:13.1px;color:#fff;transform:scaleX(1.1907);transform-origin:center center;left:450.75px;width:120px;text-align:center;">A</div>
<div class="t" style="top:114px;font-size:9.9px;color:#151515;letter-spacing:-0.597px;left:521.90px;">Personen</div>
<div class="t" style="top:137px;font-size:9.9px;color:#151515;letter-spacing:-0.381px;right:674.48px;">A_Öffnung</div>
<div class="t" style="top:137px;font-size:9.9px;color:#8a8a8a;letter-spacing:-0.330px;right:640.73px;">0</div>
<div class="t" style="top:137px;font-size:13.1px;color:#fff;transform:scaleX(1.1907);transform-origin:center center;left:273.75px;width:120px;text-align:center;">A</div>
<div class="t" style="top:137px;font-size:9.9px;color:#151515;letter-spacing:-0.977px;left:345.00px;">cm²</div>
<div class="t" style="top:137px;font-size:9.9px;color:#151515;letter-spacing:-0.742px;left:448.00px;">n50</div>
<div class="t" style="top:137px;font-size:9.9px;color:#8a8a8a;letter-spacing:-0.411px;right:463.41px;">1,00</div>
<div class="t" style="top:136px;font-size:13.1px;color:#fff;transform:scaleX(1.1907);transform-origin:center center;left:450.75px;width:120px;text-align:center;">A</div>
<div class="t" style="top:137px;font-size:9.9px;color:#151515;letter-spacing:-0.617px;left:522.00px;">1/h</div>
<div class="t" style="top:159px;font-size:9.9px;color:#151515;letter-spacing:-0.084px;right:674.18px;">Infiltration</div>
<div class="t" style="top:159px;font-size:10px;color:#151515;font-weight:bold;transform:scaleX(1.0966);transform-origin:right center;right:622.70px;">32</div>
<div class="t" style="top:160px;font-size:9.9px;color:#151515;letter-spacing:-0.083px;left:344.50px;">m³/h</div>
<div class="t" style="top:159px;font-size:9.9px;color:#151515;letter-spacing:-0.230px;left:389.00px;">Anforderungswert</div>
<div class="t" style="top:159px;font-size:10px;color:#151515;font-weight:bold;transform:scaleX(1.0966);transform-origin:right center;right:446.00px;">33</div>
<div class="t" style="top:160px;font-size:9.9px;color:#151515;letter-spacing:-0.083px;left:521.50px;">m³/h</div>
<div class="t" style="top:180px;font-size:13.1px;color:#fff;transform:scaleX(1.1907);transform-origin:center center;left:246.50px;width:120px;text-align:center;">A</div>
<div class="t" style="top:181px;font-size:9.9px;color:#151515;letter-spacing:-0.482px;left:318.00px;">mehrseitige Fassade</div>
<div class="t" style="top:195px;font-size:9.9px;color:#151515;font-weight:bold;letter-spacing:0.057px;left:243.00px;">Lüftungstechnische Maßnahme erforderlich</div>
<div class="t" style="top:86px;font-size:9.9px;color:#151515;letter-spacing:-0.513px;left:619.14px;width:120px;text-align:center;">Gesamtfläche</div>
<div class="t" style="top:97px;font-size:9.9px;color:#151515;letter-spacing:-0.238px;left:618.68px;width:120px;text-align:center;">in m²</div>
<div class="t" style="top:86px;font-size:9.9px;color:#151515;letter-spacing:-0.611px;left:680.29px;width:120px;text-align:center;">Volumenstrom</div>
<div class="t" style="top:97px;font-size:9.9px;color:#151515;letter-spacing:-0.165px;left:680.02px;width:120px;text-align:center;">in m³/h</div>
<div class="t" style="top:86px;font-size:9.9px;color:#151515;letter-spacing:-0.366px;left:740.92px;width:120px;text-align:center;">Luftwechsel</div>
<div class="t" style="top:97px;font-size:9.9px;color:#151515;letter-spacing:-0.174px;left:740.81px;width:120px;text-align:center;">in 1/h</div>
<div class="t" style="top:113px;font-size:11.8px;color:#fff;font-weight:bold;left:516.20px;width:120px;text-align:center;">Z</div>
<div class="t" style="top:114px;font-size:9.9px;color:#151515;letter-spacing:-0.360px;right:305.26px;">Zulufträume</div>
<div class="t" style="top:114px;font-size:10px;color:#151515;font-weight:bold;transform:scaleX(1.0667);transform-origin:right center;right:264.00px;">123,8</div>
<div class="t" style="top:114px;font-size:10px;color:#151515;font-weight:bold;transform:scaleX(1.0667);transform-origin:right center;right:201.40px;">180</div>
<div class="t" style="top:114px;font-size:10px;color:#151515;font-weight:bold;transform:scaleX(1.0735);transform-origin:right center;right:142.60px;">0,56</div>
<div class="t" style="top:133px;font-size:11.8px;color:#fff;font-weight:bold;left:516.20px;width:120px;text-align:center;">Ü</div>
<div class="t" style="top:134px;font-size:9.9px;color:#151515;letter-spacing:-0.461px;right:305.36px;">Überströmräume</div>
<div class="t" style="top:134px;font-size:10px;color:#151515;font-weight:bold;transform:scaleX(1.0478);transform-origin:right center;right:264.00px;">39,1</div>
<div class="t" style="top:134px;font-size:10px;color:#151515;font-weight:bold;transform:scaleX(1.0966);transform-origin:right center;right:201.40px;">0</div>
<div class="t" style="top:134px;font-size:10px;color:#151515;font-weight:bold;transform:scaleX(1.0735);transform-origin:right center;right:142.60px;">0,00</div>
<div class="t" style="top:153px;font-size:11.8px;color:#fff;font-weight:bold;left:516.20px;width:120px;text-align:center;">A</div>
<div class="t" style="top:154px;font-size:9.9px;color:#151515;letter-spacing:-0.345px;right:305.25px;">Ablufträume</div>
<div class="t" style="top:154px;font-size:10px;color:#151515;font-weight:bold;transform:scaleX(1.0889);transform-origin:right center;right:264.00px;">42,8</div>
<div class="t" style="top:154px;font-size:10px;color:#151515;font-weight:bold;transform:scaleX(1.0667);transform-origin:right center;right:201.40px;">180</div>
<div class="t" style="top:154px;font-size:10px;color:#151515;font-weight:bold;transform:scaleX(1.0735);transform-origin:right center;right:142.60px;">1,62</div>
<div class="t" style="top:231px;font-size:9.9px;color:#151515;letter-spacing:-0.473px;left:235.50px;">Lüftungstechnische Maßnahmen</div>
<div class="t" style="top:233px;font-size:9.9px;color:#151515;letter-spacing:-0.578px;left:376.50px;">Ergebnisse</div>
<div class="t" style="top:233px;font-size:9.9px;color:#151515;letter-spacing:-0.580px;left:431.00px;">Raumangaben</div>
<div class="t" style="top:233px;font-size:9.9px;color:#151515;letter-spacing:-0.581px;left:500.00px;">Beschreibung</div>
<div class="t" style="top:251px;font-size:9.9px;color:#151515;letter-spacing:-0.326px;left:249.00px;">Lüftung</div>
<div class="t" style="top:273px;font-size:9.9px;color:#151515;letter-spacing:-0.350px;left:266.00px;">Freie Lüftung</div>
<div class="t" style="top:273px;font-size:9.9px;color:#151515;letter-spacing:-0.190px;left:369.00px;">Ventilatorgestützte Lüftung</div>
<div class="t" style="top:306px;font-size:9.9px;color:#151515;letter-spacing:-0.398px;right:614.90px;">Lüftungssystem</div>
<div class="t" style="top:306px;font-size:9.9px;color:#151515;letter-spacing:-0.371px;left:351.50px;">Zu-/Abluftsystem (ZuAbLS)</div>
<div class="t" style="top:332px;font-size:9.9px;color:#151515;letter-spacing:-0.408px;left:368.00px;">Dezentral</div>
<div class="t" style="top:332px;font-size:9.9px;color:#151515;letter-spacing:-0.422px;left:424.00px;">Zentral</div>
<div class="t" style="top:354px;font-size:9.9px;color:#151515;letter-spacing:-0.295px;right:616.79px;">Bedarfsführung</div>
<div class="t" style="top:354px;font-size:9.9px;color:#151515;letter-spacing:-0.250px;left:386.80px;">raumluftabhängige Feuerstätte</div>
<div class="t" style="top:428px;font-size:9.9px;color:#151515;letter-spacing:-0.395px;right:615.69px;">ggf. Kombination</div>
<div class="t" style="top:428px;font-size:9.9px;color:#151515;letter-spacing:-0.361px;left:350.50px;">einheitliches Lüftungssystem</div>
<div class="t" style="top:715px;font-size:9.9px;color:#111;font-weight:bold;letter-spacing:0.098px;left:253.00px;">Protokoll- Anzeige</div>
<div class="t" style="top:715px;font-size:9.9px;color:#222;letter-spacing:-0.519px;left:584.80px;">Durch Klicken der mit einem</div>
<div class="t" style="top:715px;font-size:9.9px;color:#222;letter-spacing:-0.309px;left:710.60px;">markierten </div>
<div class="t" style="top:715px;font-size:9.9px;color:#222;letter-spacing:-0.417px;left:756.90px;">Zeile wird die zugehörige </div>
<div class="t" style="top:715px;font-size:9.9px;color:#222;letter-spacing:-0.615px;left:859.00px;">Eingabemaske </div>
<div class="t" style="top:715px;font-size:9.9px;color:#222;letter-spacing:0.004px;left:919.70px;">geöffnet.</div>
<div class="t" style="top:733px;font-size:9.9px;color:#17933a;letter-spacing:-0.300px;left:230.50px;">Bilanz: 22:52:19 info</div>
<div class="t" style="top:733px;font-size:9.9px;color:#17933a;letter-spacing:-0.330px;left:353.50px;">-</div>
<div class="t" style="top:733px;font-size:9.9px;color:#17933a;letter-spacing:-0.317px;left:363.50px;width:582.70px;overflow:hidden;">Korrektor: Heizbereich </div>
<div class="t" style="top:733px;font-size:9.9px;color:#17933a;letter-spacing:-0.279px;left:457.50px;width:488.70px;overflow:hidden;">"zentrale Wärmeversorgung (1)" </div>
<div class="t" style="top:733px;font-size:9.9px;color:#17933a;letter-spacing:-0.251px;left:592.80px;width:353.40px;overflow:hidden;">Wärmeverteilkreis </div>
<div class="t" style="top:733px;font-size:9.9px;color:#17933a;letter-spacing:-0.422px;left:670.30px;width:275.90px;overflow:hidden;">"Flächenheizung (1): </div>
<div class="t" style="top:733px;font-size:9.9px;color:#17933a;letter-spacing:-0.376px;left:755.40px;width:190.80px;overflow:hidden;">Baujahr des Leitungssystems </div>
<div class="t" style="top:733px;font-size:9.9px;color:#17933a;letter-spacing:-0.542px;left:877.00px;width:69.20px;overflow:hidden;">auf das Gebäude</div>
<div class="t" style="top:745px;font-size:9.9px;color:#17933a;letter-spacing:-0.300px;left:230.50px;">Bilanz: 22:52:19 info</div>
<div class="t" style="top:745px;font-size:9.9px;color:#17933a;letter-spacing:-0.330px;left:353.50px;">-</div>
<div class="t" style="top:745px;font-size:9.9px;color:#17933a;letter-spacing:-0.317px;left:363.50px;width:582.70px;overflow:hidden;">Korrektor: Heizbereich </div>
<div class="t" style="top:745px;font-size:9.9px;color:#17933a;letter-spacing:-0.279px;left:457.50px;width:488.70px;overflow:hidden;">"zentrale Wärmeversorgung (1)" </div>
<div class="t" style="top:745px;font-size:9.9px;color:#17933a;letter-spacing:-0.251px;left:592.80px;width:353.40px;overflow:hidden;">Wärmeverteilkreis </div>
<div class="t" style="top:745px;font-size:9.9px;color:#17933a;letter-spacing:-0.422px;left:670.30px;width:275.90px;overflow:hidden;">"Flächenheizung (1): </div>
<div class="t" style="top:745px;font-size:9.9px;color:#17933a;letter-spacing:-0.361px;left:755.40px;width:190.80px;overflow:hidden;">Baujahr der Regelung </div>
<div class="t" style="top:745px;font-size:9.9px;color:#17933a;letter-spacing:-0.349px;left:847.00px;width:99.20px;overflow:hidden;">auf das </div>
<div class="t" style="top:745px;font-size:9.9px;color:#17933a;letter-spacing:-0.220px;left:879.70px;width:66.50px;overflow:hidden;">Gebäudebaujahr</div>
<div class="t" style="top:756px;font-size:9.9px;color:#1d1d1d;letter-spacing:-0.299px;left:230.50px;">Bilanz: 22:52:19 warn</div>
<div class="t" style="top:756px;font-size:9.9px;color:#1d1d1d;letter-spacing:-0.330px;left:353.50px;">-</div>
<div class="t" style="top:756px;font-size:9.9px;color:#1d1d1d;letter-spacing:-0.304px;left:363.50px;width:582.70px;overflow:hidden;">Korrektor: Allgemeine Daten: Anzahl der Geschosse wurde auf 1 gesetzt.</div>
<div class="t" style="top:767px;font-size:9.9px;color:#17933a;letter-spacing:-0.300px;left:230.50px;">Bilanz: 22:52:19 info</div>
<div class="t" style="top:767px;font-size:9.9px;color:#17933a;letter-spacing:-0.330px;left:353.50px;">-</div>
<div class="t" style="top:767px;font-size:9.9px;color:#17933a;letter-spacing:-0.366px;left:363.50px;width:582.70px;overflow:hidden;">Es gab 0 Fehler und 1 Warnungen.</div>
<div class="t" style="top:778px;font-size:9.9px;color:#17933a;letter-spacing:-0.300px;left:230.50px;">Bilanz: 22:52:19 info</div>
<div class="t" style="top:778px;font-size:9.9px;color:#17933a;letter-spacing:-0.330px;left:353.50px;">-</div>
<div class="t" style="top:778px;font-size:9.9px;color:#17933a;letter-spacing:-0.458px;left:363.50px;width:582.70px;overflow:hidden;">Protokollierung der Berechnung nach DIN V 18599 - GEG/EnEV-Nach-/Ausweise</div>
<div class="t" style="top:789px;font-size:9.9px;color:#17933a;letter-spacing:-0.300px;left:230.50px;">Bilanz: 22:52:19 info</div>
<div class="t" style="top:789px;font-size:9.9px;color:#17933a;letter-spacing:-0.330px;left:353.50px;">-</div>
<div class="t" style="top:789px;font-size:9.9px;color:#17933a;letter-spacing:-0.366px;left:363.50px;width:582.70px;overflow:hidden;">Es gab 0 Fehler und 1 Warnungen.</div>
<div class="t" style="top:800px;font-size:9.9px;color:#1d1d1d;letter-spacing:-0.299px;left:230.50px;">Bilanz: 22:52:19 warn</div>
<div class="t" style="top:800px;font-size:9.9px;color:#1d1d1d;letter-spacing:-0.330px;left:353.50px;">-</div>
<div class="t" style="top:800px;font-size:9.9px;color:#1d1d1d;letter-spacing:-0.497px;left:363.50px;width:582.70px;overflow:hidden;">Im SZ Schlafzimmer (21) </div>
<div class="t" style="top:800px;font-size:9.9px;color:#1d1d1d;letter-spacing:-0.240px;left:464.00px;width:482.20px;overflow:hidden;">(Schlafraum) darf der </div>
<div class="t" style="top:800px;font-size:9.9px;color:#1d1d1d;letter-spacing:-0.326px;left:555.00px;width:391.20px;overflow:hidden;">Zuluftvolumenstrom </div>
<div class="t" style="top:800px;font-size:9.9px;color:#1d1d1d;letter-spacing:-0.326px;left:638.60px;width:307.60px;overflow:hidden;">für die Nennlüftung </div>
<div class="t" style="top:800px;font-size:9.9px;color:#1d1d1d;letter-spacing:-0.307px;left:718.60px;width:227.60px;overflow:hidden;">nicht kleiner als 30 </div>
<div class="t" style="top:800px;font-size:9.9px;color:#1d1d1d;letter-spacing:-0.240px;left:797.00px;width:149.20px;overflow:hidden;">(15 m³/h je Person) </div>
<div class="t" style="top:800px;font-size:9.9px;color:#1d1d1d;letter-spacing:-0.220px;left:879.70px;width:66.50px;overflow:hidden;">ausgelegt werden</div>
<div class="t" style="top:811px;font-size:9.9px;color:#1d1d1d;letter-spacing:-0.299px;left:230.50px;">Bilanz: 22:52:19 warn</div>
<div class="t" style="top:811px;font-size:9.9px;color:#1d1d1d;letter-spacing:-0.330px;left:353.50px;">-</div>
<div class="t" style="top:811px;font-size:9.9px;color:#1d1d1d;letter-spacing:-0.497px;left:363.50px;width:582.70px;overflow:hidden;">Im SZ Schlafzimmer (21) </div>
<div class="t" style="top:811px;font-size:9.9px;color:#1d1d1d;letter-spacing:-0.240px;left:464.00px;width:482.20px;overflow:hidden;">(Schlafraum) darf der </div>
<div class="t" style="top:811px;font-size:9.9px;color:#1d1d1d;letter-spacing:-0.326px;left:555.00px;width:391.20px;overflow:hidden;">Zuluftvolumenstrom </div>
<div class="t" style="top:811px;font-size:9.9px;color:#1d1d1d;letter-spacing:-0.326px;left:638.60px;width:307.60px;overflow:hidden;">für die Nennlüftung </div>
<div class="t" style="top:811px;font-size:9.9px;color:#1d1d1d;letter-spacing:-0.307px;left:718.60px;width:227.60px;overflow:hidden;">nicht kleiner als 30 </div>
<div class="t" style="top:811px;font-size:9.9px;color:#1d1d1d;letter-spacing:-0.240px;left:797.00px;width:149.20px;overflow:hidden;">(15 m³/h je Person) </div>
<div class="t" style="top:811px;font-size:9.9px;color:#1d1d1d;letter-spacing:-0.220px;left:879.70px;width:66.50px;overflow:hidden;">ausgelegt werden</div>
<div class="t" style="top:822px;font-size:9.9px;color:#17933a;letter-spacing:-0.431px;left:230.50px;">EVEBI: 22:52:26 info</div>
<div class="t" style="top:822px;font-size:9.9px;color:#17933a;letter-spacing:-0.330px;left:353.50px;">-</div>
<div class="t" style="top:822px;font-size:9.9px;color:#17933a;letter-spacing:-0.331px;left:363.50px;width:582.70px;overflow:hidden;">Es liegt eine Aktualisierung </div>
<div class="t" style="top:822px;font-size:9.9px;color:#17933a;letter-spacing:-0.230px;left:475.00px;width:471.20px;overflow:hidden;">für die Klimadaten vor. </div>
<div class="t" style="top:822px;font-size:9.9px;color:#17933a;letter-spacing:-0.388px;left:570.70px;width:375.50px;overflow:hidden;">Auf dem Server liegen </div>
<div class="t" style="top:822px;font-size:9.9px;color:#17933a;letter-spacing:-0.305px;left:663.00px;width:283.20px;overflow:hidden;">Klimadaten bis 03.2025 vor. </div>
<div class="t" style="top:822px;font-size:9.9px;color:#17933a;letter-spacing:-0.371px;left:779.40px;width:166.80px;overflow:hidden;">Zum Aktualisieren gehen </div>
<div class="t" style="top:822px;font-size:9.9px;color:#17933a;letter-spacing:-0.324px;left:882.30px;width:63.90px;overflow:hidden;">Sie bitte auf </div>
<div class="t" style="top:822px;font-size:9.9px;color:#17933a;letter-spacing:-0.220px;left:933.00px;width:13.20px;overflow:hidden;">Extras</div>
<div class="t" style="top:833px;font-size:9.9px;color:#1d1d1d;letter-spacing:-0.430px;left:230.50px;">EVEBI: 22:52:32 warn</div>
<div class="t" style="top:833px;font-size:9.9px;color:#1d1d1d;letter-spacing:-0.330px;left:353.50px;">-</div>
<div class="t" style="top:833px;font-size:9.9px;color:#1d1d1d;letter-spacing:-0.497px;left:363.50px;width:582.70px;overflow:hidden;">Im SZ Schlafzimmer (21) </div>
<div class="t" style="top:833px;font-size:9.9px;color:#1d1d1d;letter-spacing:-0.240px;left:464.00px;width:482.20px;overflow:hidden;">(Schlafraum) darf der </div>
<div class="t" style="top:833px;font-size:9.9px;color:#1d1d1d;letter-spacing:-0.326px;left:555.00px;width:391.20px;overflow:hidden;">Zuluftvolumenstrom </div>
<div class="t" style="top:833px;font-size:9.9px;color:#1d1d1d;letter-spacing:-0.326px;left:638.60px;width:307.60px;overflow:hidden;">für die Nennlüftung </div>
<div class="t" style="top:833px;font-size:9.9px;color:#1d1d1d;letter-spacing:-0.307px;left:718.60px;width:227.60px;overflow:hidden;">nicht kleiner als 30 </div>
<div class="t" style="top:833px;font-size:9.9px;color:#1d1d1d;letter-spacing:-0.240px;left:797.00px;width:149.20px;overflow:hidden;">(15 m³/h je Person) </div>
<div class="t" style="top:833px;font-size:9.9px;color:#1d1d1d;letter-spacing:-0.220px;left:879.70px;width:66.50px;overflow:hidden;">ausgelegt werden</div>
<div class="t" style="top:844px;font-size:9.9px;color:#1d1d1d;letter-spacing:-0.299px;left:230.50px;">Bilanz: 22:54:31 warn</div>
<div class="t" style="top:844px;font-size:9.9px;color:#1d1d1d;letter-spacing:-0.330px;left:353.50px;">-</div>
<div class="t" style="top:844px;font-size:9.9px;color:#1d1d1d;letter-spacing:-0.304px;left:363.50px;width:582.70px;overflow:hidden;">Korrektor: Allgemeine Daten: Anzahl der Geschosse wurde auf 1 gesetzt.</div>
</body></html>
